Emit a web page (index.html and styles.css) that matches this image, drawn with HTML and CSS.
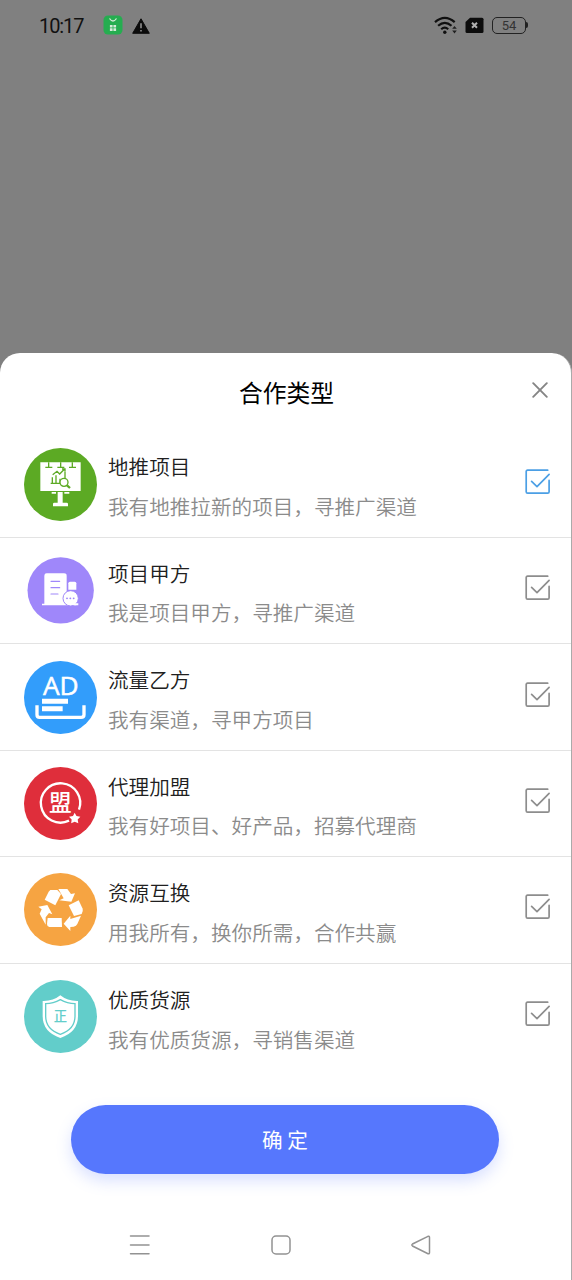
FILE: index.html
```html
<!DOCTYPE html>
<html lang="zh-CN">
<head>
<meta charset="UTF-8">
<title>合作类型</title>
<link rel="stylesheet" href="styles.css">
</head>
<body>
<svg class="defs" aria-hidden="true">
  <symbol id="check" viewBox="0 0 26 26">
    <path d="M22.7 1.2H2.6Q1.2 1.2 1.2 2.6V22.7Q1.2 24.1 2.6 24.1H22.7Q24.1 24.1 24.1 22.7V11.4M6.6 12.4L12 17.6L24.1 5.4" fill="none" stroke="currentColor" stroke-width="1.7" stroke-linecap="round" stroke-linejoin="round"/>
  </symbol>
</svg>
<div class="screen">
  <header class="status">
    <span class="clock">10:17</span>
    <svg class="app" viewBox="0 0 20 20"><rect x=".5" y=".5" width="19" height="19" rx="4.5" fill="#25ad50"/><path d="M6.5 3.5Q10 8.5 13.5 3.5" fill="none" stroke="#d5ead9" stroke-width="1.3"/><path d="M6.9 10h2.7v2.5H6.900zM10.400 10H13.100v2.500h-2.700zM6.900 13.300h2.700V16H6.900zM10.400 13.300H13.100V16h-2.700z" fill="#d5ead9"/></svg>
    <svg class="warn" viewBox="0 0 18 16"><path d="M9 .8L17.3 15.3H.7Z" fill="#0c0c0c" stroke="#0c0c0c" stroke-linejoin="round"/><path d="M9 5.3V10.3M9 11.9V13.6" stroke="#898989" stroke-width="1.7"/></svg>
    <svg class="wifi" viewBox="0 0 24 20"><g fill="none" stroke="#101010" stroke-width="2.2"><path d="M1 6.2Q10.8-2.4 20.7 6.2"/><path d="M4.1 9.8Q10.8 3.8 17.5 9.8"/><path d="M7.2 13.2Q10.8 10 14.2 13.2"/></g><circle cx="10.8" cy="16.2" r="1.7" fill="#101010"/><path d="M18.2 12.8l2.3-2.8 2.3 2.8zM18.2 14.6l2.3 2.8 2.3-2.8z" fill="#202020"/></svg>
    <svg class="sim" viewBox="0 0 19 17"><path d="M5 .8H17Q18.5.8 18.5 2.3V14.5Q18.5 16 17 16H2Q.5 16 .5 14.5V5Z" fill="#0c0c0c"/><path d="M7 5.8l5 5M12 5.8l-5 5" stroke="#b0b0b0" stroke-width="2"/></svg>
    <span class="battery">54</span>
  </header>

  <main class="sheet">
    <div class="heading">
      <h1>合作类型</h1>
      <svg class="close" viewBox="0 0 16 16"><path d="M1.2 1.2L14.8 14.8M14.8 1.2L1.2 14.8" stroke="#858585" stroke-width="1.9" stroke-linecap="round"/></svg>
    </div>
    <ul class="options">
      <li class="option selected">
        <svg class="icon" viewBox="27 24 219 219"><circle cx="136.500" cy="133.500" r="109.500" fill="#5caa24"/><path d="M76 67H197V153H76Z" fill="#fff"/><g fill="none" stroke="#5caa24" stroke-width="4"><path d="M101 67V81M91 82H112M137 67V81M127 82H148M172 67V81M162 82H183"/><path d="M113 104L126 94L134 102L148 88M141 87H150V95M107 130H140M112 130V112M123 130V106M135 130V116M150 114V96"/><circle cx="147" cy="127" r="12" fill="#fff" stroke-width="4"/><path d="M156 136L165 144" stroke-width="7"/></g><path d="M110 156H123V161H110ZM148 156H163V161H148ZM128 156H143V188H155Q159 188 159 192V199H114V192Q114 188 118 188H128Z" fill="#fff"/></svg>
        <div class="copy"><h2>地推项目</h2><p>我有地推拉新的项目，寻推广渠道</p></div>
        <svg class="check"><use href="#check"/></svg>
      </li>
      <li class="option">
        <svg class="icon" viewBox="27 25 219 219"><circle cx="137" cy="134" r="99.500" fill="#9f87fa"/><path d="M81 174H88V90Q88 83 95 83H147Q155 83 155 90V174H184V179H81Z" fill="#fff"/><path d="M160 132V113Q160 108 165 108H179Q184 108 184 113V132Z" fill="#fff"/><path d="M108 107H134M108 126H134M108 145H129" stroke="#9f87fa" stroke-width="3.500" stroke-linecap="round"/><circle cx="167" cy="158" r="23" fill="#fff" stroke="#9f87fa" stroke-width="3"/><path d="M171 173H190V179H177Z" fill="#fff"/><g fill="#9f87fa"><circle cx="156" cy="158" r="2.800"/><circle cx="166" cy="158" r="2.800"/><circle cx="176" cy="158" r="2.800"/></g></svg>
        <div class="copy"><h2>项目甲方</h2><p>我是项目甲方，寻推广渠道</p></div>
        <svg class="check"><use href="#check"/></svg>
      </li>
      <li class="option">
        <svg class="icon" viewBox="27 26 219 219"><circle cx="136.500" cy="135.500" r="109.500" fill="#329dfb"/><text class="ad" x="84" y="129" textLength="107" lengthAdjust="spacingAndGlyphs">AD</text><path d="M81 139H159V154H81ZM81 162H143V177H81Z" fill="#fff"/><path d="M66 159V187Q66 195 74 195H198Q207 195 207 187V159" fill="none" stroke="#fff" stroke-width="10"/></svg>
        <div class="copy"><h2>流量乙方</h2><p>我有渠道，寻甲方项目</p></div>
        <svg class="check"><use href="#check"/></svg>
      </li>
      <li class="option">
        <svg class="icon" viewBox="27 27 219 219"><circle cx="136.500" cy="136.500" r="109.500" fill="#df2e3b"/><path d="M162 188A59 59 0 1 1 192 155" fill="none" stroke="#fff" stroke-width="7"/><text class="seal" x="136" y="160">盟</text><path d="M179 164L184.500 174L196 176L188 184.500L190 196L179 191L168.500 196L170 184.500L162 176L174 174Z" fill="#fff"/></svg>
        <div class="copy"><h2>代理加盟</h2><p>我有好项目、好产品，招募代理商</p></div>
        <svg class="check"><use href="#check"/></svg>
      </li>
      <li class="option">
        <svg class="icon" viewBox="27 25 219 219"><circle cx="136.500" cy="134.500" r="109.500" fill="#f6a442"/><g fill="#fff"><path d="M106 76H127L138 88L121 122L89 105L101 81Z"/><path d="M130 73H157L168 88L180 86L169 111L133 107L146 101Z"/><path d="M161 122L191 107L203 132Q205 140 200 148L177 154Z"/><path d="M146 177L166 153V163L198 153L187 178Q184 185 176 186L166 187V199Z"/><path d="M98 160L140 160L141 187H103Q96 186 96 178Z"/><path d="M70 126L97 121L112 149L102 145L92 158V180L74 147L80 134Z"/></g></svg>
        <div class="copy"><h2>资源互换</h2><p>用我所有，换你所需，合作共赢</p></div>
        <svg class="check"><use href="#check"/></svg>
      </li>
      <li class="option">
        <svg class="icon" viewBox="27 27 219 219"><circle cx="136.500" cy="136.500" r="109.500" fill="#62cdca"/><path d="M136 73Q158 91 189 90V135Q189 183 136 201Q83 183 83 135V90Q114 91 136 73Z" fill="#fff"/><path d="M136 86Q157 98 180 98V136Q180 175 136 190Q92 175 92 136V98Q115 98 136 86Z" fill="none" stroke="#62cdca" stroke-width="4"/><text class="shield" x="136" y="151">正</text></svg>
        <div class="copy"><h2>优质货源</h2><p>我有优质货源，寻销售渠道</p></div>
        <svg class="check"><use href="#check"/></svg>
      </li>
    </ul>
    <button class="confirm">确 定</button>
    <nav class="keys">
      <svg viewBox="0 0 22 22"><path d="M1.500 2H20M1.500 11H20M1.500 19.700H20"/></svg>
      <svg viewBox="0 0 22 22"><rect x="2" y="2" width="18" height="18" rx="4"/></svg>
      <svg viewBox="0 0 22 22"><path d="M18 2.300L2.500 10Q1.200 11 2.500 12L18 19.700Q19.500 20.200 19.500 18.500V3.500Q19.500 1.800 18 2.300Z"/></svg>
    </nav>
  </main>
</div>
</body>
</html>
```
FILE: styles.css
```css
* { box-sizing: border-box; }
body { margin: 0; font-family: "Noto Sans CJK SC", sans-serif; }
.defs { display: none; }
.screen { display: flex; flex-direction: column; height: 1280px; background: #808080; overflow: hidden; }
.status { flex: none; height: 353px; padding: 14px 44px 0 39px; display: flex; align-items: flex-start; color: #111; }
.clock { width: 64px; font: 20px/24px Roboto, sans-serif; letter-spacing: -1.1px; }
.app { width: 20px; height: 20px; margin-top: 1px; }
.warn { width: 18px; height: 16px; margin: 4px auto 0 9px; }
.wifi { width: 24px; height: 20px; margin-top: 2px; }
.sim { width: 19px; height: 17px; margin: 3px 8px 0 7px; }
.battery { position: relative; width: 34px; height: 17px; margin: 3px 2px 0 0; border: 1.5px solid #222; border-radius: 5px; font: 13px/15px Roboto, sans-serif; text-align: center; color: #333; }
.battery::after { content: ""; position: absolute; right: -3px; top: 4px; width: 2px; height: 6px; background: #222; border-radius: 0 2px 2px 0; }
.sheet { flex: 1; display: flex; flex-direction: column; background: #fff; border-radius: 20px 20px 0 0; border-right: 1px solid #aaa; }
.heading { height: 78.6px; display: grid; grid-template-columns: 1fr auto 1fr; padding: 0 23px 0 25px; align-items: center; }
.heading h1 { grid-column: 2; margin: 0; font-size: 23.8px; line-height: 34px; font-weight: 400; color: #000; }
.close { width: 16px; height: 16px; justify-self: end; margin-bottom: 4px; }
.options { margin: 0; padding: 0; list-style: none; }
.option { height: 106.4px; display: flex; align-items: center; padding: 0 20px 0 24px; border-bottom: 1px solid #e3e3e3; color: #8d8d8d; }
.option:last-child { border-bottom: 0; }
.icon { width: 73px; height: 73px; flex: none; }
.copy { flex: 1; padding: 4px 0 0 11px; }
.copy h2, .copy p { margin: 0; font-size: 20.6px; line-height: 30px; font-weight: 350; white-space: nowrap; }
.copy h2 { color: #202020; margin-bottom: 9.6px; }
.copy p { color: #8b8b8b; }
.check { width: 26px; height: 26px; margin-bottom: 5px; flex: none; }
.selected .check { color: #4b9fe5; }
.ad { font: 76px "Open Sans", sans-serif; fill: #fff; stroke: #fff; stroke-width: 1.5; }
.seal, .shield { font-family: "Noto Sans CJK SC", sans-serif; text-anchor: middle; }
.seal { font-size: 68px; font-weight: 500; fill: #fff; }
.shield { font-size: 40px; font-weight: 500; fill: #62cdca; }
.confirm { width: 428px; height: 69px; margin: 35px 0 0 71px; padding: 0; border: 0; border-radius: 35px; background: #5677fd; color: #fff; font: 400 20.6px/69px "Noto Sans CJK SC", sans-serif; box-shadow: 0 7px 15px rgba(86, 119, 253, .22); }
.keys { display: flex; justify-content: space-between; padding: 0 139px 0 129px; margin-top: 60px; }
.keys svg { width: 22px; height: 22px; fill: none; stroke: #929292; stroke-width: 1.5; stroke-linecap: round; }
```
